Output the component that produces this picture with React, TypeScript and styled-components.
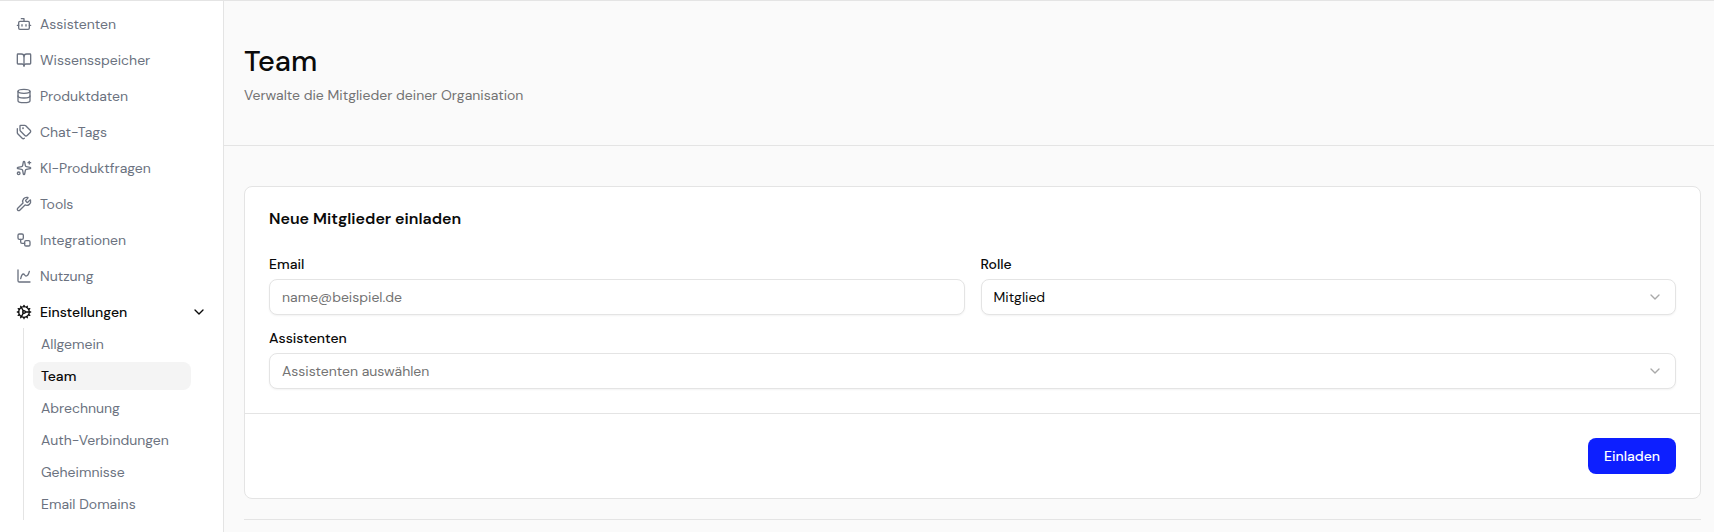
import type { ComponentType, FormEvent, ReactNode } from "react";
import styled, { createGlobalStyle, css, ThemeProvider } from "styled-components";
import {
  BookOpen,
  Bot,
  ChartSpline,
  ChevronDown,
  Cog,
  Database,
  Sparkles,
  Tags,
  Workflow,
  Wrench,
} from "lucide-react";

const theme = {
  colors: {
    background: "#fafafa",
    surface: "#ffffff",
    border: "#e4e4e4",
    text: "#0a0a0a",
    textMuted: "#737373",
    navText: "#6b7280",
    navActive: "#f4f4f4",
    icon: "#a9a9a9",
    primary: "#0d1fff",
  },
  radius: "8px",
  shadow: "0 1px 2px rgba(0, 0, 0, 0.05)",
};

type Theme = typeof theme;

declare module "styled-components" {
  export interface DefaultTheme extends Theme {}
}

const GlobalStyle = createGlobalStyle`
  *, *::before, *::after {
    box-sizing: border-box;
  }

  body {
    margin: 0;
    background-color: ${theme.colors.background};
    color: ${theme.colors.text};
    font-family: "DM Sans", Inter, sans-serif;
    font-size: 14px;
    line-height: 20px;
  }

  h1, h2, p, ul {
    margin: 0;
    padding: 0;
  }

  ul {
    list-style: none;
  }

  button, input, select {
    font: inherit;
  }
`;

const Layout = styled.div`
  display: flex;
  min-height: 100vh;
  border-top: 1px solid ${({ theme }) => theme.colors.border};
`;

const Sidebar = styled.nav`
  flex: 0 0 224px;
  padding: 7px 8px 8px;
  background-color: ${({ theme }) => theme.colors.surface};
  border-right: 1px solid ${({ theme }) => theme.colors.border};
`;

const NavList = styled.ul`
  display: flex;
  flex-direction: column;
  gap: 4px;
`;

const navItem = css`
  display: flex;
  align-items: center;
  gap: 8px;
  width: 100%;
  height: 32px;
  padding: 0 8px;
  color: ${({ theme }) => theme.colors.navText};
  text-decoration: none;
`;

const NavLink = styled.a`
  ${navItem}
`;

const NavToggle = styled.button`
  ${navItem}
  border: none;
  background: none;
  color: ${({ theme }) => theme.colors.text};
  font-weight: 500;
  cursor: pointer;

  svg:last-child {
    margin-left: auto;
  }
`;

const SubList = styled.ul`
  display: flex;
  flex-direction: column;
  gap: 4px;
  margin: 0 24px 0 15px;
  padding: 2px 0 2px 9px;
  border-left: 1px solid ${({ theme }) => theme.colors.border};
`;

const SubLink = styled.a<{ $active?: boolean }>`
  display: flex;
  align-items: center;
  height: 28px;
  padding: 0 8px;
  border-radius: ${({ theme }) => theme.radius};
  background-color: ${({ theme, $active }) =>
    $active ? theme.colors.navActive : "transparent"};
  color: ${({ theme, $active }) =>
    $active ? theme.colors.text : theme.colors.navText};
  font-weight: ${({ $active }) => ($active ? 500 : 400)};
  text-decoration: none;
`;

const Main = styled.main`
  flex: 1;
  min-width: 0;
`;

const PageHeader = styled.header`
  display: flex;
  flex-direction: column;
  gap: 4px;
  padding: 40px 20px;
  border-bottom: 1px solid ${({ theme }) => theme.colors.border};
`;

const PageTitle = styled.h1`
  font-size: 29px;
  line-height: 40px;
  font-weight: 500;
`;

const PageSubtitle = styled.p`
  color: ${({ theme }) => theme.colors.textMuted};
`;

const PageBody = styled.div`
  display: flex;
  flex-direction: column;
  gap: 20px;
  padding: 40px 13px 12px 20px;
`;

const Card = styled.form`
  background-color: ${({ theme }) => theme.colors.surface};
  border: 1px solid ${({ theme }) => theme.colors.border};
  border-radius: ${({ theme }) => theme.radius};
`;

const CardTitle = styled.h2`
  padding: 24px 24px 6px;
  font-size: 16px;
  line-height: 16px;
  font-weight: 600;
`;

const CardContent = styled.div`
  display: grid;
  grid-template-columns: 1fr 1fr;
  gap: 16px;
  padding: 24px;
`;

const CardFooter = styled.div`
  display: flex;
  justify-content: flex-end;
  padding: 24px;
  border-top: 1px solid ${({ theme }) => theme.colors.border};
`;

const FieldWrapper = styled.div<{ $wide?: boolean }>`
  display: flex;
  flex-direction: column;
  gap: 8px;
  grid-column: ${({ $wide }) => ($wide ? "1 / -1" : "auto")};
`;

const Label = styled.label`
  line-height: 14px;
  font-weight: 500;
`;

const control = css`
  width: 100%;
  height: 36px;
  padding: 0 12px;
  background-color: ${({ theme }) => theme.colors.surface};
  border: 1px solid ${({ theme }) => theme.colors.border};
  border-radius: ${({ theme }) => theme.radius};
  box-shadow: ${({ theme }) => theme.shadow};
  color: ${({ theme }) => theme.colors.text};
`;

const Input = styled.input`
  ${control}

  &::placeholder {
    color: ${({ theme }) => theme.colors.textMuted};
    opacity: 1;
  }
`;

const SelectWrapper = styled.div`
  display: grid;
  align-items: center;

  > * {
    grid-area: 1 / 1;
  }

  svg {
    justify-self: end;
    margin-right: 13px;
    color: ${({ theme }) => theme.colors.icon};
    pointer-events: none;
  }
`;

const Select = styled.select`
  ${control}
  appearance: none;

  &:invalid {
    color: ${({ theme }) => theme.colors.textMuted};
  }
`;

const SubmitButton = styled.button`
  height: 36px;
  padding: 0 16px;
  border: none;
  border-radius: ${({ theme }) => theme.radius};
  background-color: ${({ theme }) => theme.colors.primary};
  color: ${({ theme }) => theme.colors.surface};
  font-weight: 500;
  cursor: pointer;

  &:hover {
    opacity: 0.9;
  }
`;

const Divider = styled.hr`
  width: 100%;
  margin: 0;
  border: none;
  border-top: 1px solid ${({ theme }) => theme.colors.border};
`;

interface NavEntry {
  label: string;
  icon: ComponentType<{ size?: number }>;
}

const navEntries: NavEntry[] = [
  { label: "Assistenten", icon: Bot },
  { label: "Wissensspeicher", icon: BookOpen },
  { label: "Produktdaten", icon: Database },
  { label: "Chat-Tags", icon: Tags },
  { label: "KI-Produktfragen", icon: Sparkles },
  { label: "Tools", icon: Wrench },
  { label: "Integrationen", icon: Workflow },
  { label: "Nutzung", icon: ChartSpline },
];

const settingsEntries = [
  "Allgemein",
  "Team",
  "Abrechnung",
  "Auth-Verbindungen",
  "Geheimnisse",
  "Email Domains",
];

interface FieldProps {
  id: string;
  label: string;
  wide?: boolean;
  children: ReactNode;
}

function Field({ id, label, wide, children }: FieldProps) {
  return (
    <FieldWrapper $wide={wide}>
      <Label htmlFor={id}>{label}</Label>
      {children}
    </FieldWrapper>
  );
}

function Navigation() {
  return (
    <Sidebar>
      <NavList>
        {navEntries.map(({ label, icon: Icon }) => (
          <li key={label}>
            <NavLink href="#">
              <Icon size={16} />
              {label}
            </NavLink>
          </li>
        ))}
        <li>
          <NavToggle type="button" aria-expanded="true">
            <Cog size={16} />
            Einstellungen
            <ChevronDown size={16} />
          </NavToggle>
          <SubList>
            {settingsEntries.map((label) => (
              <li key={label}>
                <SubLink href="#" $active={label === "Team"}>
                  {label}
                </SubLink>
              </li>
            ))}
          </SubList>
        </li>
      </NavList>
    </Sidebar>
  );
}

function InviteForm() {
  const handleSubmit = (event: FormEvent) => event.preventDefault();

  return (
    <Card onSubmit={handleSubmit}>
      <CardTitle>Neue Mitglieder einladen</CardTitle>
      <CardContent>
        <Field id="email" label="Email">
          <Input id="email" type="email" placeholder="name@beispiel.de" />
        </Field>
        <Field id="role" label="Rolle">
          <SelectWrapper>
            <Select id="role" defaultValue="member">
              <option value="member">Mitglied</option>
              <option value="admin">Admin</option>
            </Select>
            <ChevronDown size={16} />
          </SelectWrapper>
        </Field>
        <Field id="assistants" label="Assistenten" wide>
          <SelectWrapper>
            <Select id="assistants" defaultValue="" required>
              <option value="">Assistenten auswählen</option>
            </Select>
            <ChevronDown size={16} />
          </SelectWrapper>
        </Field>
      </CardContent>
      <CardFooter>
        <SubmitButton type="submit">Einladen</SubmitButton>
      </CardFooter>
    </Card>
  );
}

export default function App() {
  return (
    <ThemeProvider theme={theme}>
      <GlobalStyle />
      <Layout>
        <Navigation />
        <Main>
          <PageHeader>
            <PageTitle>Team</PageTitle>
            <PageSubtitle>Verwalte die Mitglieder deiner Organisation</PageSubtitle>
          </PageHeader>
          <PageBody>
            <InviteForm />
            <Divider />
          </PageBody>
        </Main>
      </Layout>
    </ThemeProvider>
  );
}
